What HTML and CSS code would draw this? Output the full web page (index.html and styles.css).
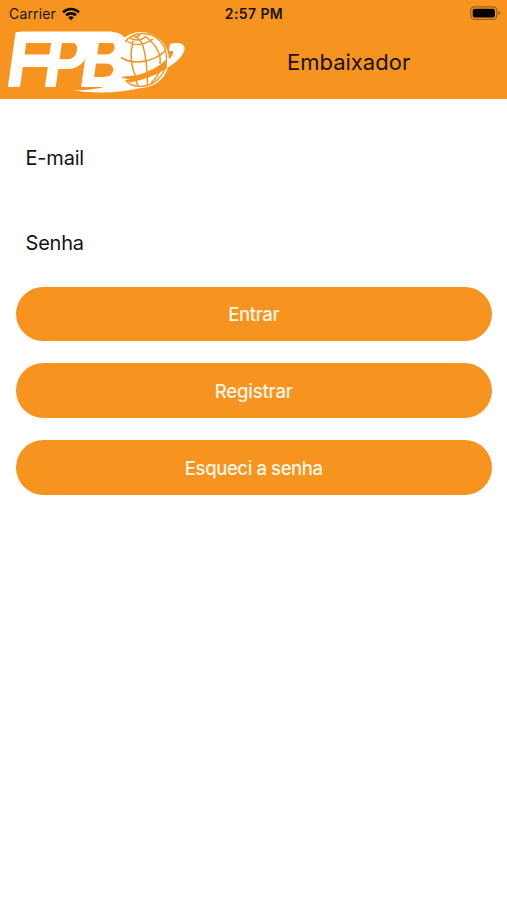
FILE: index.html
```html
<!DOCTYPE html>
<html lang="pt-BR">
<head>
<meta charset="utf-8">
<title>Embaixador</title>
<link rel="stylesheet" href="styles.css">
</head>
<body>
<header class="header">
  <div class="status">
    <div class="carrier"><span>Carrier</span>
      <svg class="wifi" width="18" height="14" viewBox="0 0 18 14"><path d="M.2 4.4C5-.6 13-.6 17.8 4.4L16 6.2C12 2.3 6 2.3 2 6.2ZM3.2 7.4C6.5 4.2 11.5 4.2 14.8 7.4L12.9 9.2C10.8 7.1 7.2 7.1 5.1 9.2ZM6.3 10.4C7.8 9 10.2 9 11.7 10.4L9 13.2Z"/></svg>
    </div>
    <time class="time">2:57 PM</time>
    <svg class="battery" width="31" height="15" viewBox="0 0 31 15"><rect x=".8" y=".8" width="26" height="12.6" rx="3.6" fill="none" stroke="#9b6220" stroke-width="1.3"/><rect x="2.7" y="2.7" width="22.2" height="8.8" rx="1.8"/><path d="M28.3 5Q30.3 5.5 30.3 7T28.3 9Z" fill="#9b6220"/></svg>
  </div>
  <div class="bar">
    <svg class="logo" width="190" height="71" viewBox="0 27 190 71">
      <g class="letters">
        <text transform="translate(3.5 86) skewX(-8)" textLength="45" lengthAdjust="spacingAndGlyphs">F</text>
        <text transform="translate(41 86) skewX(-8)" textLength="44" lengthAdjust="spacingAndGlyphs">P</text>
        <text transform="translate(77 86) skewX(-8)" textLength="48" lengthAdjust="spacingAndGlyphs">B</text>
      </g>
      <path fill="#fff" d="M20 31.500H112V43H20ZM22 54.500H52L51 67H21Z"/>
      <path fill="#fff" d="M73 90.5Q102 91 122 80L146 87Q108 96 73 90.5Z"/>
      <path fill="#fff" d="M170 44C177 42 184 43 184.500 48C184.500 55 177 62 167 68L169 59Q174 55 173 51L169 51Z"/>
      <path fill="#fff" d="M116 54H126V82H116Z"/>
      <circle cx="141" cy="60" r="28" fill="#fff"/>
      <path fill="none" stroke="#f7941f" stroke-width="1.300" d="M125 42C133 31 150 31 159 40C169 49 169 68 159 78C151 88 134 89 126 81"/>
      <g fill="none" stroke="#f7941f" stroke-width="1.500">
        <path d="M121 57.500Q128 62 138 62Q155 61 165 51M127 41Q138 49 153 39M130 38Q140 43 146 36M133 36Q137 39 140 34M136 36L142 43Q147 57 147.500 86M133 41Q128 61 136 77M145 36Q162 49 160 64M135 78L138 86M160 70Q156 79 151 83"/>
      </g>
      <path fill="#f7941f" d="M130 76L138 75Q155 70 166 60L167 68Q153 78 130 82.500L124 80L130 80L120 77Z"/>
    </svg>
    <h1 class="title">Embaixador</h1>
  </div>
</header>
<main class="form">
  <label class="field">E-mail</label>
  <label class="field">Senha</label>
  <div class="actions">
    <button class="button">Entrar</button>
    <button class="button registrar">Registrar</button>
    <button class="button senha">Esqueci a senha</button>
  </div>
</main>
</body>
</html>
```
FILE: styles.css
```css
* { box-sizing: border-box; }
body { margin: 0; min-height: 900px; background: #fff; color: #161310; font-family: Inter, "Liberation Sans", sans-serif; }
.header { height: 98.5px; background: #f7941f; }
.status { display: grid; grid-template-columns: 1fr auto 1fr; height: 27px; align-items: center; padding: 0 6px 0 9px; font-size: 14px; letter-spacing: .15px; }
.time { font-weight: 600; letter-spacing: .4px; margin-right: 2px; }
.carrier { display: flex; align-items: center; gap: 6px; }
.battery { justify-self: end; }
.bar { display: flex; height: 71px; }
.logo { flex: none; overflow: visible; }
.letters { font: 600 73px Inter, sans-serif; fill: #fff; stroke: #fff; stroke-width: 2px; stroke-linejoin: round; }
.title { margin: 0 0 0 97px; font-size: 22px; line-height: 71px; font-weight: 400; }
.form { padding: 16px 15px 0 15.5px; }
.field { display: block; height: 85.5px; padding-left: 10px; line-height: 87px; font-size: 20px; letter-spacing: -.2px; }
.actions { display: grid; gap: 22px; padding-top: 1.3px; }
.button { height: 54.6px; border: 0; border-radius: 28px; background: #f7941f; color: #fff7e8; font: 500 18.5px Inter, sans-serif; padding: 0; letter-spacing: -.4px; }
.registrar { letter-spacing: -.2px; }
.senha { padding-top: 1px; }
```
